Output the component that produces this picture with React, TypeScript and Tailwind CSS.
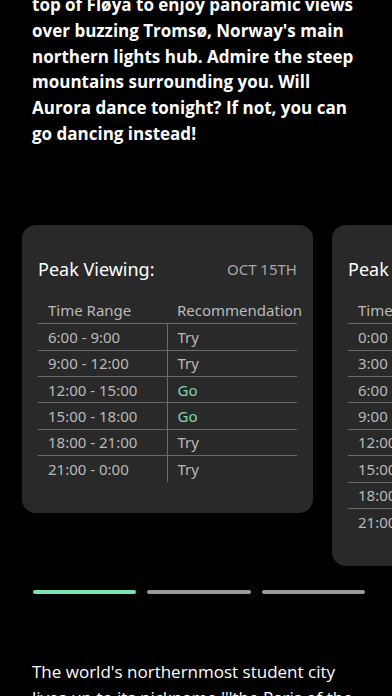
import React from "react";

type Row = { range: string; rec: "Try" | "Go" };

const dayOne: Row[] = [
  { range: "6:00 - 9:00", rec: "Try" },
  { range: "9:00 - 12:00", rec: "Try" },
  { range: "12:00 - 15:00", rec: "Go" },
  { range: "15:00 - 18:00", rec: "Go" },
  { range: "18:00 - 21:00", rec: "Try" },
  { range: "21:00 - 0:00", rec: "Try" },
];

const dayTwo: Row[] = [
  { range: "0:00 - 3:00", rec: "Try" },
  { range: "3:00 - 6:00", rec: "Try" },
  { range: "6:00 - 9:00", rec: "Try" },
  { range: "9:00 - 12:00", rec: "Try" },
  { range: "12:00 - 15:00", rec: "Go" },
  { range: "15:00 - 18:00", rec: "Go" },
  { range: "18:00 - 21:00", rec: "Try" },
  { range: "21:00 - 0:00", rec: "Try" },
];

const PeakCard = ({ date, rows }: { date: string; rows: Row[] }) => (
  <div className="w-[291px] shrink-0 self-start rounded-[14px] bg-[#292929] px-4 pt-[31px] pb-[31px]">
    <div className="flex items-center justify-between">
      <h3 className="text-[18px] text-white">Peak Viewing:</h3>
      <span className="text-[15px] text-[#a8a8a8]">{date}</span>
    </div>
    <table className="mt-[15px] w-[259px] table-fixed border-collapse text-[15px] text-[#b9b9b9]">
      <thead>
        <tr className="border-b border-[#6a6a6a]">
          <th className="h-[26px] w-[129px] pl-[10px] text-left font-normal">Time Range</th>
          <th className="pl-[10px] text-left font-normal whitespace-nowrap">Recommendation</th>
        </tr>
      </thead>
      <tbody>
        {rows.map((row, i) => (
          <tr key={row.range} className={i < rows.length - 1 ? "border-b border-[#6a6a6a]" : ""}>
            <td className="h-[26.4px] border-r border-[#6a6a6a] pl-[10px] whitespace-nowrap">{row.range}</td>
            <td className={`pl-[10px] ${row.rec === "Go" ? "text-[#7fd6b1]" : ""}`}>{row.rec}</td>
          </tr>
        ))}
      </tbody>
    </table>
  </div>
);

const App: React.FC = () => {
  return (
    <div className="h-[696px] w-[392px] overflow-hidden bg-black font-['Open_Sans',sans-serif]">
      <p className="-mt-[8px] px-[32px] text-[17px] font-bold leading-[25.8px] text-white">
        top of Fløya to enjoy panoramic views over buzzing Tromsø, Norway's main northern lights hub. Admire the
        steep mountains surrounding you. Will Aurora dance tonight? If not, you can go dancing instead!
      </p>

      <div className="mt-[78px] flex gap-[19px] overflow-hidden pl-[22px] font-['Noto_Sans',sans-serif]">
        <PeakCard date="OCT 15TH" rows={dayOne} />
        <PeakCard date="OCT 16TH" rows={dayTwo} />
      </div>

      <div className="mt-[24px] flex gap-[11px] pl-[33px] pr-[27px]">
        <div className="h-[4px] flex-1 rounded-full bg-[#7de2b4]" />
        <div className="h-[4px] flex-1 rounded-full bg-[#9a9a9a]" />
        <div className="h-[4px] flex-1 rounded-full bg-[#9a9a9a]" />
      </div>

      <p className="mt-[65px] px-[32px] text-[17px] leading-[25.8px] text-white">
        The world's northernmost student city lives up to its nickname '''the Paris of the North'''.
      </p>
    </div>
  );
};

export default App;
